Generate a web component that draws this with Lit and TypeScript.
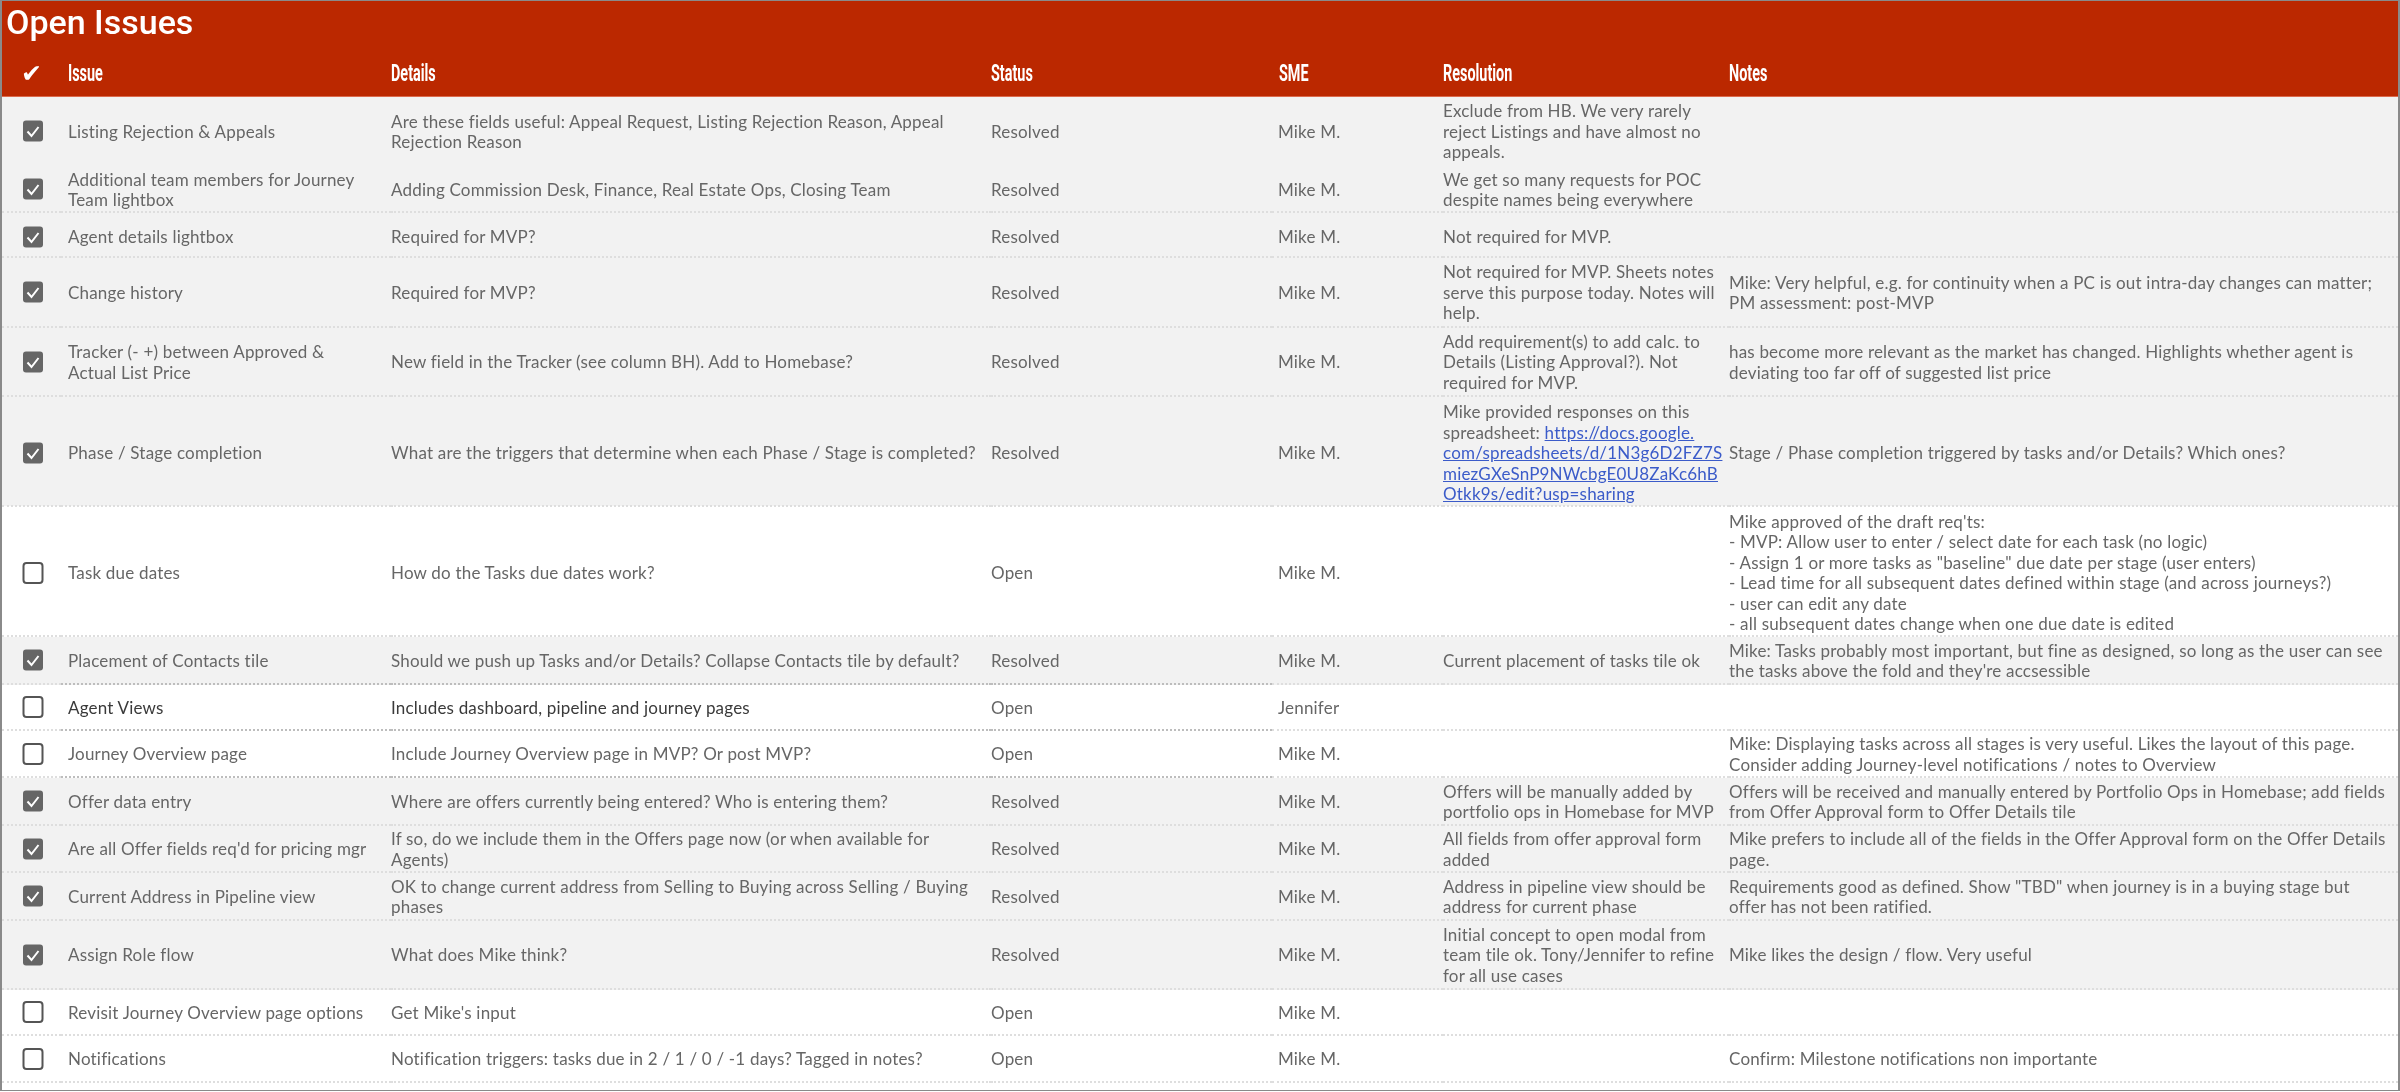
import { LitElement, html, css } from "lit";
import { customElement } from "lit/decorators.js";

type Row = {
  h: number; done: boolean; issue: string; details: string; status: string; sme: string;
  res?: string; notes?: string; link?: boolean; dark?: boolean; ink?: boolean; noLine?: boolean; low?: boolean;
};

const rows: Row[] = [
  { h: 70, done: true, noLine: true, issue: "Listing Rejection & Appeals", details: "Are these fields useful: Appeal Request, Listing Rejection Reason, Appeal\nRejection Reason", status: "Resolved", sme: "Mike M.", res: "Exclude from HB. We very rarely\nreject Listings and have almost no\nappeals." },
  { h: 46, done: true, issue: "Additional team members for Journey\nTeam lightbox", details: "Adding Commission Desk, Finance, Real Estate Ops, Closing Team", status: "Resolved", sme: "Mike M.", res: "We get so many requests for POC\ndespite names being everywhere" },
  { h: 45, done: true, low: true, issue: "Agent details lightbox", details: "Required for MVP?", status: "Resolved", sme: "Mike M.", res: "Not required for MVP." },
  { h: 70, done: true, issue: "Change history", details: "Required for MVP?", status: "Resolved", sme: "Mike M.", res: "Not required for MVP. Sheets notes\nserve this purpose today. Notes will\nhelp.", notes: "Mike: Very helpful, e.g. for continuity when a PC is out intra-day changes can matter;\nPM assessment: post-MVP" },
  { h: 69, done: true, issue: "Tracker (- +) between Approved &\nActual List Price", details: "New field in the Tracker (see column BH). Add to Homebase?", status: "Resolved", sme: "Mike M.", res: "Add requirement(s) to add calc. to\nDetails (Listing Approval?). Not\nrequired for MVP.", notes: "has become more relevant as the market has changed. Highlights whether agent is\ndeviating too far off of suggested list price" },
  { h: 109, done: true, link: true, low: true, issue: "Phase / Stage completion", details: "What are the triggers that determine when each Phase / Stage is completed?", status: "Resolved", sme: "Mike M.", notes: "Stage / Phase completion triggered by tasks and/or Details? Which ones?" },
  { h: 131, done: false, low: true, issue: "Task due dates", details: "How do the Tasks due dates work?", status: "Open", sme: "Mike M.", notes: "Mike approved of the draft req'ts:\n- MVP: Allow user to enter / select date for each task (no logic)\n- Assign 1 or more tasks as \"baseline\" due date per stage (user enters)\n- Lead time for all subsequent dates defined within stage (and across journeys?)\n- user can edit any date\n- all subsequent dates change when one due date is edited" },
  { h: 48, done: true, dark: true, issue: "Placement of Contacts tile", details: "Should we push up Tasks and/or Details? Collapse Contacts tile by default?", status: "Resolved", sme: "Mike M.", res: "Current placement of tasks tile ok", notes: "Mike: Tasks probably most important, but fine as designed, so long as the user can see\nthe tasks above the fold and they're accsessible" },
  { h: 46, done: false, dark: true, ink: true, issue: "Agent Views", details: "Includes dashboard, pipeline and journey pages", status: "Open", sme: "Jennifer" },
  { h: 47, done: false, dark: true, issue: "Journey Overview page", details: "Include Journey Overview page in MVP? Or post MVP?", status: "Open", sme: "Mike M.", notes: "Mike: Displaying tasks across all stages is very useful. Likes the layout of this page.\nConsider adding Journey-level notifications / notes to Overview" },
  { h: 48, done: true, issue: "Offer data entry", details: "Where are offers currently being entered? Who is entering them?", status: "Resolved", sme: "Mike M.", res: "Offers will be manually added by\nportfolio ops in Homebase for MVP", notes: "Offers will be received and manually entered by Portfolio Ops in Homebase; add fields\nfrom Offer Approval form to Offer Details tile" },
  { h: 47, done: true, issue: "Are all Offer fields req'd for pricing mgr", details: "If so, do we include them in the Offers page now (or when available for\nAgents)", status: "Resolved", sme: "Mike M.", res: "All fields from offer approval form\nadded", notes: "Mike prefers to include all of the fields in the Offer Approval form on the Offer Details\npage." },
  { h: 48, done: true, issue: "Current Address in Pipeline view", details: "OK to change current address from Selling to Buying across Selling / Buying\nphases", status: "Resolved", sme: "Mike M.", res: "Address in pipeline view should be\naddress for current phase", notes: "Requirements good as defined. Show \"TBD\" when journey is in a buying stage but\noffer has not been ratified." },
  { h: 69, done: true, issue: "Assign Role flow", details: "What does Mike think?", status: "Resolved", sme: "Mike M.", res: "Initial concept to open modal from\nteam tile ok. Tony/Jennifer to refine\nfor all use cases", notes: "Mike likes the design / flow. Very useful" },
  { h: 46, done: false, issue: "Revisit Journey Overview page options", details: "Get Mike's input", status: "Open", sme: "Mike M." },
  { h: 47, done: false, issue: "Notifications", details: "Notification triggers: tasks due in 2 / 1 / 0 / -1 days? Tagged in notes?", status: "Open", sme: "Mike M.", notes: "Confirm: Milestone notifications non importante" },
];

@customElement("app-root")
export class AppRoot extends LitElement {
  static styles = css`
    :host { display: block; width: 2400px; height: 1092px; background: #fff; font-family: Lato, "Noto Sans", sans-serif; overflow: hidden; }
    .frame { box-sizing: border-box; width: 2400px; height: 1091px; border: 1px solid #8a8a8a; border-left-width: 2px; border-right-width: 2px; background: #fff; filter: blur(.4px); }
    .head { background: #bb2800; height: 96px; box-sizing: border-box; border-bottom: 1px solid #dc6a4c; }
    .title { height: 49px; padding-left: 4px; font: 500 34px/43px Roboto, sans-serif; color: #fff; }
    .grid { display: grid; grid-template-columns: 59px 330px 600px 281px 171px 286px 1fr; }
    .labels { height: 46px; align-items: center; }
    .labels > span { padding-left: 7px; }
    .tick { color: #fff; font: 400 25px/1 "DejaVu Sans", sans-serif; justify-self: center; padding: 0 !important; }
    .label { display: block; color: #fff; font: 700 24px/30px Roboto, sans-serif; transform: scaleX(.6); transform-origin: left center; white-space: nowrap; }
    .cols2 { padding-left: 0 !important; }
    .row { background: #fff; color: #666; }
    .row.done { background: #f2f2f2; }
    .row.ink .main { color: #3a3a3a; }
    .cell { display: flex; align-items: center; white-space: pre; font-size: 17px; line-height: 20.5px; letter-spacing: 0.19px; border-bottom: 2px dotted #dedede; box-sizing: border-box; min-width: 0; padding-top: 2px; }
    .row.low .cell { padding-top: 5px; }
    .row.noline .cell { border-bottom-color: transparent; }
    .row.dark .strong { border-bottom-color: #bdbdbd; }
    .pad { padding-left: 7px; }
    .sme { padding-left: 6px; }
    .row .check { justify-content: center; padding-left: 2px; padding-top: 0; }
    .box { display: block; width: 22px; height: 22px; }
    a { color: #3b5bc9; text-decoration: underline; }
  `;

  private box(done: boolean) {
    return done
      ? html`<svg class="box" viewBox="0 0 21 22"><rect x=".5" y=".5" width="20" height="21" rx="3" fill="#666"/><path d="M5 11.5l4 4.5 7-9" fill="none" stroke="#fff" stroke-width="2"/></svg>`
      : html`<svg class="box" viewBox="0 0 21 22"><rect x="1" y="1" width="19" height="20" rx="3" fill="#fff" stroke="#555" stroke-width="2"/></svg>`;
  }

  render() {
    const heads = ["Issue", "Details", "Status", "SME", "Resolution", "Notes"];
    return html`<div class="frame">
      <div class="head">
        <div class="title">Open Issues</div>
        <div class="grid labels">
          <span class="tick">✔</span>
          ${heads.map((h, i) => html`<span class="${i === 0 || i === 3 ? "" : "cols2"}"><span class="label">${h}</span></span>`)}
        </div>
      </div>
      ${rows.map((r) => html`<div class="grid row ${r.done ? "done" : ""} ${r.dark ? "dark" : ""} ${r.ink ? "ink" : ""} ${r.noLine ? "noline" : ""} ${r.low ? "low" : ""}" style="height:${r.h}px">
        <div class="cell check">${this.box(r.done)}</div>
        <div class="cell pad strong main">${r.issue}</div>
        <div class="cell strong main">${r.details}</div>
        <div class="cell strong">${r.status}</div>
        <div class="cell sme">${r.sme}</div>
        <div class="cell">${r.link
          ? html`<div>Mike provided responses on this
spreadsheet: <a href="#">https://docs.google.
com/spreadsheets/d/1N3g6D2FZ7S
miezGXeSnP9NWcbgE0U8ZaKc6hB
Otkk9s/edit?usp=sharing</a></div>`
          : html`<div>${r.res ?? ""}</div>`}</div>
        <div class="cell"><div>${r.notes ?? ""}</div></div>
      </div>`)}
    </div>`;
  }
}
